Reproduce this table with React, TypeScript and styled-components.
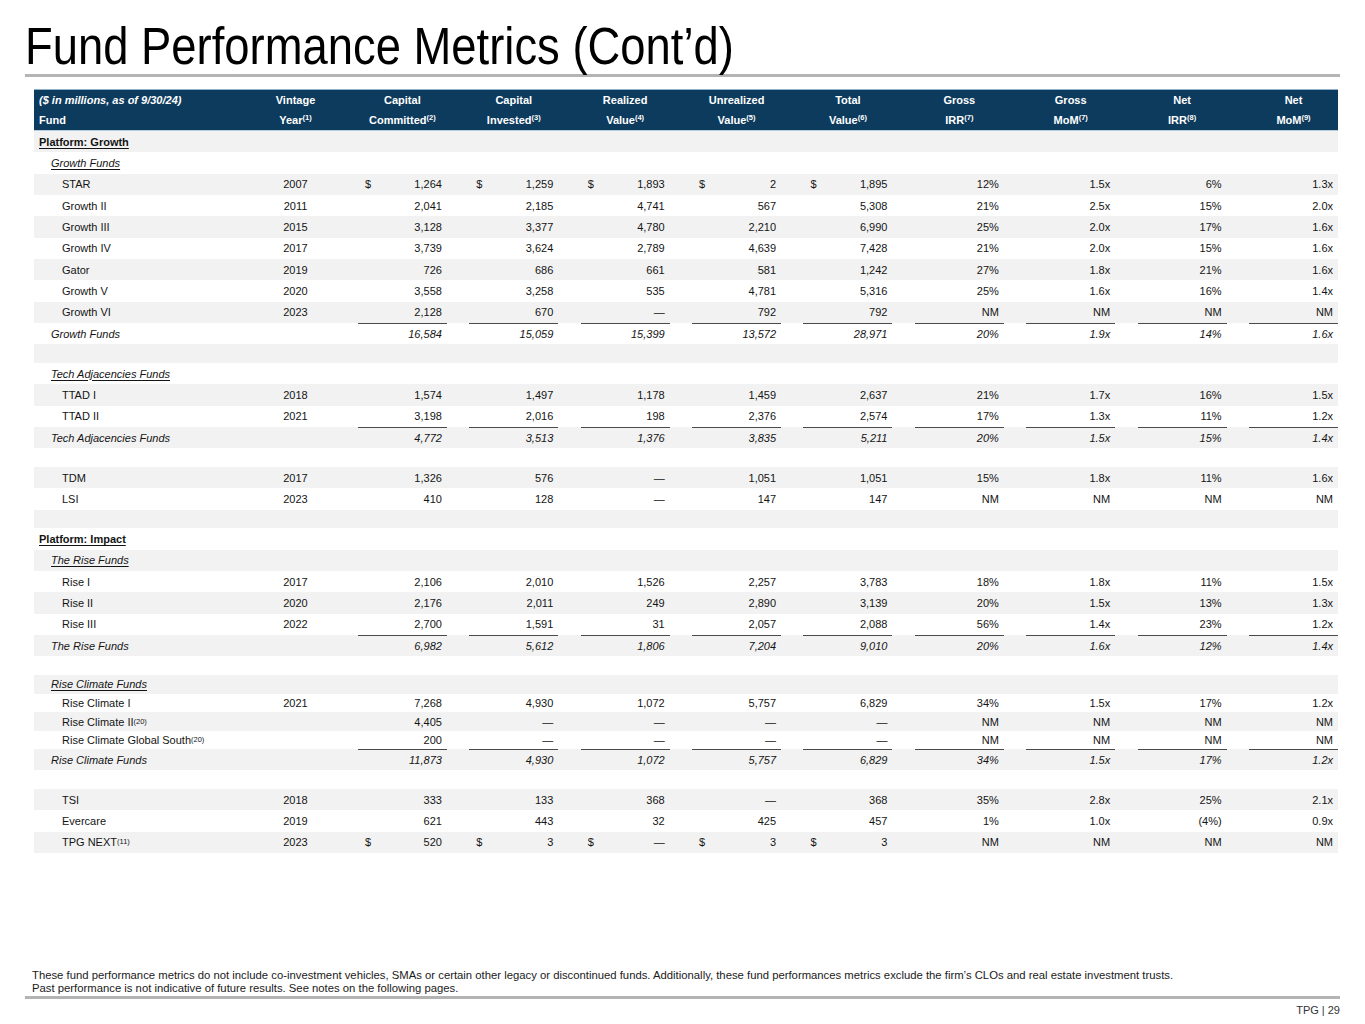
import React from 'react'
import styled, { createGlobalStyle, css } from 'styled-components'

const GlobalStyle = createGlobalStyle`
  html, body {
    margin: 0;
    padding: 0;
    background: #ffffff;
  }
  body {
    font-family: 'Liberation Sans', Arial, sans-serif;
    color: #1a1a1a;
  }
`

const Page = styled.div`
  width: 1365px;
  height: 1024px;
  display: flex;
  flex-direction: column;
  box-sizing: border-box;
  padding: 0 25px 0 25px;
`
const Title = styled.h1`
  margin: 0;
  padding: 22px 0 0 0;
  font-size: 51px;
  font-weight: normal;
  line-height: 50px;
  color: #000;
  white-space: nowrap;
  transform: scaleX(0.89);
  transform-origin: left center;
`
const TitleRule = styled.div`
  height: 3px;
  margin-top: 2px;
  background: #b4b4b4;
`
const Table = styled.div`
  margin: 12px 2px 0 9px;
  display: flex;
  flex-direction: column;
`
const grid = css`
  display: grid;
  grid-template-columns: 1fr 80px repeat(9, 89px);
  column-gap: 22.4px;
`
const Head = styled.div`
  background: #0d3b5e;
  border-top: 1px solid #8fb0cb;
  border-bottom: 1px solid #b9cddd;
`
const HeadRow = styled.div`
  ${grid};
  height: 20px;
  align-items: center;
  font-size: 11px;
  font-weight: bold;
  color: #fff;
`
const HeadCell = styled.div<{ $left?: boolean; $italic?: boolean }>`
  text-align: ${({ $left }) => ($left ? 'left' : 'center')};
  padding-left: ${({ $left }) => ($left ? '5px' : '0')};
  font-style: ${({ $italic }) => ($italic ? 'italic' : 'normal')};
  white-space: nowrap;
`
const Sup = styled.sup`
  font-size: 7.5px;
  line-height: 0;
  vertical-align: 4px;
`
const Row = styled.div<{ $h: number }>`
  ${grid};
  height: ${({ $h }) => $h}px;
  align-items: stretch;
  font-size: 11px;
  color: #141414;
  &:nth-child(odd) {
    background: #f2f2f2;
  }
`
const NameCell = styled.div<{ $kind: string }>`
  display: flex;
  align-items: center;
  white-space: nowrap;
  padding-left: ${({ $kind }) =>
    $kind === 'platform' ? '5px' : $kind === 'group' || $kind === 'total' ? '17px' : '28px'};
  font-weight: ${({ $kind }) => ($kind === 'platform' ? 'bold' : 'normal')};
  font-style: ${({ $kind }) => ($kind === 'group' || $kind === 'total' ? 'italic' : 'normal')};
  text-decoration: ${({ $kind }) =>
    $kind === 'platform' || $kind === 'group' ? 'underline' : 'none'};
  text-underline-offset: 2px;
`
const YearCell = styled.div`
  display: flex;
  align-items: center;
  justify-content: center;
`
const NumCell = styled.div<{ $total?: boolean }>`
  display: flex;
  align-items: center;
  justify-content: space-between;
  padding: 0 5px 0 7px;
  font-style: ${({ $total }) => ($total ? 'italic' : 'normal')};
  box-shadow: ${({ $total }) => ($total ? 'inset 0 1px 0 #4a4a4a' : 'none')};
`
const Footer = styled.div`
  margin-top: auto;
  padding: 0 0 0 7px;
  font-size: 11.3px;
  line-height: 13px;
  color: #1a1a1a;
`
const FooterRule = styled.div`
  height: 3px;
  margin-top: 1px;
  background: #b4b4b4;
`
const PageNum = styled.div`
  text-align: right;
  font-size: 11px;
  line-height: 13px;
  padding: 5px 0 0 0;
  height: 20px;
  color: #333;
`

type Kind = 'platform' | 'group' | 'fund' | 'total' | 'spacer'
type Line = { kind: Kind; name?: string; sup?: string; year?: string; v?: string[]; dollar?: boolean; h?: number }

const D = '—'

const rows: Line[] = [
  { kind: 'platform', name: 'Platform: Growth' },
  { kind: 'group', name: 'Growth Funds' },
  { kind: 'fund', name: 'STAR', year: '2007', dollar: true, v: ['1,264', '1,259', '1,893', '2', '1,895', '12%', '1.5x', '6%', '1.3x'] },
  { kind: 'fund', name: 'Growth II', year: '2011', v: ['2,041', '2,185', '4,741', '567', '5,308', '21%', '2.5x', '15%', '2.0x'] },
  { kind: 'fund', name: 'Growth III', year: '2015', v: ['3,128', '3,377', '4,780', '2,210', '6,990', '25%', '2.0x', '17%', '1.6x'] },
  { kind: 'fund', name: 'Growth IV', year: '2017', v: ['3,739', '3,624', '2,789', '4,639', '7,428', '21%', '2.0x', '15%', '1.6x'] },
  { kind: 'fund', name: 'Gator', year: '2019', v: ['726', '686', '661', '581', '1,242', '27%', '1.8x', '21%', '1.6x'] },
  { kind: 'fund', name: 'Growth V', year: '2020', v: ['3,558', '3,258', '535', '4,781', '5,316', '25%', '1.6x', '16%', '1.4x'] },
  { kind: 'fund', name: 'Growth VI', year: '2023', v: ['2,128', '670', D, '792', '792', 'NM', 'NM', 'NM', 'NM'] },
  { kind: 'total', name: 'Growth Funds', v: ['16,584', '15,059', '15,399', '13,572', '28,971', '20%', '1.9x', '14%', '1.6x'] },
  { kind: 'spacer' },
  { kind: 'group', name: 'Tech Adjacencies Funds' },
  { kind: 'fund', name: 'TTAD I', year: '2018', v: ['1,574', '1,497', '1,178', '1,459', '2,637', '21%', '1.7x', '16%', '1.5x'] },
  { kind: 'fund', name: 'TTAD II', year: '2021', v: ['3,198', '2,016', '198', '2,376', '2,574', '17%', '1.3x', '11%', '1.2x'] },
  { kind: 'total', name: 'Tech Adjacencies Funds', v: ['4,772', '3,513', '1,376', '3,835', '5,211', '20%', '1.5x', '15%', '1.4x'] },
  { kind: 'spacer' },
  { kind: 'fund', name: 'TDM', year: '2017', v: ['1,326', '576', D, '1,051', '1,051', '15%', '1.8x', '11%', '1.6x'] },
  { kind: 'fund', name: 'LSI', year: '2023', v: ['410', '128', D, '147', '147', 'NM', 'NM', 'NM', 'NM'] },
  { kind: 'spacer' },
  { kind: 'platform', name: 'Platform: Impact' },
  { kind: 'group', name: 'The Rise Funds' },
  { kind: 'fund', name: 'Rise I', year: '2017', v: ['2,106', '2,010', '1,526', '2,257', '3,783', '18%', '1.8x', '11%', '1.5x'] },
  { kind: 'fund', name: 'Rise II', year: '2020', v: ['2,176', '2,011', '249', '2,890', '3,139', '20%', '1.5x', '13%', '1.3x'] },
  { kind: 'fund', name: 'Rise III', year: '2022', v: ['2,700', '1,591', '31', '2,057', '2,088', '56%', '1.4x', '23%', '1.2x'] },
  { kind: 'total', name: 'The Rise Funds', v: ['6,982', '5,612', '1,806', '7,204', '9,010', '20%', '1.6x', '12%', '1.4x'] },
  { kind: 'spacer' },
  { kind: 'group', name: 'Rise Climate Funds', h: 19 },
  { kind: 'fund', name: 'Rise Climate I', year: '2021', h: 18.5, v: ['7,268', '4,930', '1,072', '5,757', '6,829', '34%', '1.5x', '17%', '1.2x'] },
  { kind: 'fund', name: 'Rise Climate II', sup: '(20)', h: 18.5, v: ['4,405', D, D, D, D, 'NM', 'NM', 'NM', 'NM'] },
  { kind: 'fund', name: 'Rise Climate Global South', sup: '(20)', h: 18.5, v: ['200', D, D, D, D, 'NM', 'NM', 'NM', 'NM'] },
  { kind: 'total', name: 'Rise Climate Funds', h: 21, v: ['11,873', '4,930', '1,072', '5,757', '6,829', '34%', '1.5x', '17%', '1.2x'] },
  { kind: 'spacer' },
  { kind: 'fund', name: 'TSI', year: '2018', v: ['333', '133', '368', D, '368', '35%', '2.8x', '25%', '2.1x'] },
  { kind: 'fund', name: 'Evercare', year: '2019', v: ['621', '443', '32', '425', '457', '1%', '1.0x', '(4%)', '0.9x'] },
  { kind: 'fund', name: 'TPG NEXT', sup: '(11)', year: '2023', dollar: true, v: ['520', '3', D, '3', '3', 'NM', 'NM', 'NM', 'NM'] },
]

const heads: [string, string, string][] = [
  ['Vintage', 'Year', '(1)'],
  ['Capital', 'Committed', '(2)'],
  ['Capital', 'Invested', '(3)'],
  ['Realized', 'Value', '(4)'],
  ['Unrealized', 'Value', '(5)'],
  ['Total', 'Value', '(6)'],
  ['Gross', 'IRR', '(7)'],
  ['Gross', 'MoM', '(7)'],
  ['Net', 'IRR', '(8)'],
  ['Net', 'MoM', '(9)'],
]

const App = () => {
  return (
    <Page>
      <GlobalStyle />
      <Title>Fund Performance Metrics (Cont’d)</Title>
      <TitleRule />
      <Table>
        <Head>
          <HeadRow>
            <HeadCell $left $italic>($ in millions, as of 9/30/24)</HeadCell>
            {heads.map((h, i) => (
              <HeadCell key={i}>{h[0]}</HeadCell>
            ))}
          </HeadRow>
          <HeadRow>
            <HeadCell $left>Fund</HeadCell>
            {heads.map((h, i) => (
              <HeadCell key={i}>
                {h[1]}
                <Sup>{h[2]}</Sup>
              </HeadCell>
            ))}
          </HeadRow>
        </Head>
        <div>
          {rows.map((r, i) => (
            <Row key={i} $h={r.h ?? (r.kind === 'spacer' ? 18.7 : 21.33)}>
              <NameCell $kind={r.kind}>
                {r.name}
                {r.sup && <Sup>{r.sup}</Sup>}
              </NameCell>
              <YearCell>{r.year}</YearCell>
              {r.v
                ? r.v.map((val, j) => (
                    <NumCell key={j} $total={r.kind === 'total'}>
                      <span>{r.dollar && j < 5 ? '$' : ''}</span>
                      <span>{val}</span>
                    </NumCell>
                  ))
                : null}
            </Row>
          ))}
        </div>
      </Table>
      <Footer>
        These fund performance metrics do not include co-investment vehicles, SMAs or certain other legacy or discontinued funds. Additionally, these fund performances metrics exclude the firm’s CLOs and real estate investment trusts.
        <br />
        Past performance is not indicative of future results. See notes on the following pages.
      </Footer>
      <FooterRule />
      <PageNum>TPG | 29</PageNum>
    </Page>
  )
}

export default App
